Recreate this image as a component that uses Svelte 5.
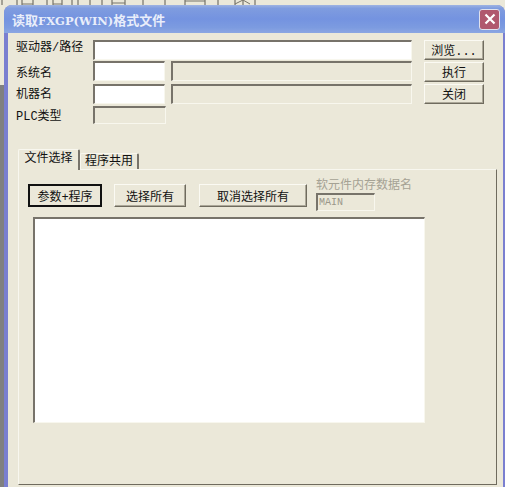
<script>
  const tabs = ['文件选择', '程序共用'];
  const topButtons = ['浏览...', '执行', '关闭'];
  // bits of the main app's toolbar icons peeking out above the dialog
  const marks = [2, 17, 22, 33, 47, 53, 62, 72, 78, 90, 102, 112, 125, 143, 165, 185, 205, 218, 235, 243, 255];
  let activeTab = $state(0);
</script>

<div class="screen">
  <div class="backdrop">
    <svg width="270" height="8" viewBox="0 0 270 8">
      {#each marks as x}
        <path d="M{x} 0 V5" stroke="#5c5a52" stroke-width="1" fill="none" />
      {/each}
      <path d="M22 4 H33 M53 4 H62 M112 3 H125 M185 1 H205 M235 4 L243 0 L250 4" stroke="#77746a" stroke-width="1" fill="none" />
    </svg>
  </div>
  <div class="window">
    <header class="titlebar">
      <span class="title">读取<span class="latin">FXGP(WIN)</span>格式文件</span>
      <button class="close" aria-label="关闭窗口">
        <svg width="14" height="14" viewBox="0 0 14 14">
          <path d="M2.5 2.5 L11.5 11.5 M11.5 2.5 L2.5 11.5" stroke="#fff" stroke-width="2.2" fill="none" />
        </svg>
      </button>
    </header>

    <div class="client">
      <div class="top">
        <div class="fields">
          <div class="row first">
            <span class="label">驱动器/路径</span>
            <input class="field path" />
          </div>
          <div class="row second">
            <span class="label">系统名</span>
            <input class="field short" />
            <input class="field long" disabled />
          </div>
          <div class="row">
            <span class="label">机器名</span>
            <input class="field short" />
            <input class="field long" disabled />
          </div>
          <div class="row last">
            <span class="label">PLC类型</span>
            <input class="field plc" disabled />
          </div>
        </div>
        <div class="actions">
          {#each topButtons as b}
            <button class="btn action">{b}</button>
          {/each}
        </div>
      </div>

      <div class="tabstrip">
        {#each tabs as t, i}
          <button class="tab" class:active={activeTab === i} onclick={() => (activeTab = i)}>{t}</button>
        {/each}
      </div>

      <section class="pane">
        <div class="toolbar">
          <button class="btn default">参数+程序</button>
          <button class="btn all">选择所有</button>
          <button class="btn none">取消选择所有</button>
          <div class="memory">
            <span class="mem-label">软元件内存数据名</span>
            <input class="field mem" disabled value="MAIN" />
          </div>
        </div>
        <div class="list"></div>
      </section>
    </div>
  </div>
</div>

<style>
  :global(body) {
    margin: 0;
    background: #ebe8d9;
  }

  .screen {
    position: relative;
    width: 505px;
    height: 487px;
    overflow: hidden;
    font-family: "Liberation Mono", "Noto Sans CJK SC", monospace;
    font-size: 12px;
    color: #111;
    background: linear-gradient(180deg, #ebe8d9 0 85px, #808080 85px);
  }

  .backdrop {
    position: absolute;
    inset: 0 0 auto 0;
    height: 8px;
    line-height: 0;
  }

  .window {
    position: absolute;
    left: 4px;
    top: 5px;
    width: 501px;
    height: 482px;
    box-sizing: border-box;
    display: flex;
    flex-direction: column;
    padding: 0 2px 0 4px;
    background: #7a7fd0;
    border-radius: 8px 8px 0 0;
  }

  .titlebar {
    height: 28px;
    margin: 0 -2px 0 -4px;
    padding: 0 5px 0 8px;
    display: flex;
    align-items: center;
    justify-content: space-between;
    flex: none;
    border-radius: 8px 8px 0 0;
    background: linear-gradient(180deg, #9fb3e2 0, #7f9cdf 12%, #7493e0 50%, #7c9be0 80%, #8ba6e2 100%);
  }

  .title {
    color: #e9eefa;
    font-family: "DejaVu Serif", "Noto Sans CJK SC", serif;
    font-weight: 700;
    font-size: 13px;
  }
  .latin {
    font-size: 11.5px;
  }

  .close {
    width: 21px;
    height: 21px;
    padding: 0;
    display: flex;
    align-items: center;
    justify-content: center;
    border: 1px solid #dfe2ee;
    border-radius: 3px;
    background: #b0586e;
  }

  .client {
    flex: 1;
    min-height: 0;
    padding: 7px 0 0 8px;
    display: flex;
    flex-direction: column;
    background: #ebe8d9;
  }

  .top {
    display: flex;
    justify-content: space-between;
    padding-right: 19px;
  }

  .fields {
    display: flex;
    flex-direction: column;
    gap: 3px;
  }

  .row {
    display: flex;
    align-items: center;
    height: 20px;
  }
  .row.second {
    margin-top: -2px;
  }
  .row.last {
    height: 18px;
    margin-top: -1px;
  }

  .label {
    width: 77px;
    flex: none;
    margin-top: 2px;
    white-space: nowrap;
    line-height: 20px;
  }
  .first .label {
    margin-top: -4px;
  }
  .second .label {
    margin-top: 6px;
  }
  .last .label {
    margin-top: 4px;
  }

  .field {
    box-sizing: border-box;
    height: 100%;
    margin: 0;
    padding: 0 1px;
    background: #fff;
    border: 1px solid #f8f7ee;
    border-top: 2px solid #77736a;
    border-left: 2px solid #77736a;
    border-radius: 0;
    outline: none;
  }
  .field:disabled {
    background: #ebe8d9;
  }
  .path {
    width: 319px;
  }
  .short {
    width: 72px;
  }
  .long {
    width: 241px;
    margin-left: 6px;
  }
  .plc {
    width: 73px;
  }

  .actions {
    display: flex;
    flex-direction: column;
    gap: 2px;
  }

  .btn {
    box-sizing: border-box;
    padding: 0;
    font: inherit;
    color: #111;
    background: #ebe8d9;
    border: 1px solid;
    border-color: #fbfaf3 #6f6b5e #6f6b5e #fbfaf3;
    box-shadow: inset -1px -1px 0 #aca899;
    border-radius: 0;
  }
  .action {
    width: 60px;
    height: 20px;
  }

  .tabstrip {
    display: flex;
    align-items: flex-end;
    height: 20px;
    margin-top: 25px;
    padding-left: 2px;
    position: relative;
    z-index: 1;
  }

  .tab {
    box-sizing: border-box;
    height: 16px;
    width: 59px;
    padding: 0;
    font: inherit;
    color: #111;
    line-height: 14px;
    background: #ebe8d9;
    border: 1px solid #f8f7ef;
    border-bottom: none;
    border-right: 2px solid #77736a;
    border-radius: 2px 2px 0 0;
  }
  .tab.active {
    height: 21px;
    width: 62px;
    padding-bottom: 3px;
    margin-bottom: -1px;
  }

  .pane {
    flex: 1;
    min-height: 0;
    box-sizing: border-box;
    margin-bottom: 2px;
    width: 479px;
    margin-left: 2px;
    padding: 9px 9px 0 9px;
    border: 1px solid;
    border-color: #f8f7ef #6f6b5e #6f6b5e #f8f7ef;
  }

  .toolbar {
    display: flex;
    align-items: flex-start;
    height: 38px;
  }

  .toolbar .btn {
    height: 23px;
    margin-top: 5px;
  }
  .default {
    width: 74px;
    border: 2px solid #111 !important;
    box-shadow: none;
  }
  .all {
    width: 72px;
    margin-left: 12px;
  }
  .none {
    width: 108px;
    margin-left: 13px;
  }

  .memory {
    display: flex;
    flex-direction: column;
    margin-left: 9px;
  }
  .mem-label {
    color: #a5a294;
    line-height: 14px;
    white-space: nowrap;
  }
  .mem {
    width: 59px;
    height: 18px;
    font-family: "Liberation Mono", monospace;
    font-size: 10px;
    color: #9a978a;
  }

  .list {
    box-sizing: border-box;
    width: 392px;
    height: 206px;
    margin-left: 5px;
    background: #fff;
    border: 1px solid #f8f7ee;
    border-top: 2px solid #77736a;
    border-left: 2px solid #77736a;
  }
</style>
